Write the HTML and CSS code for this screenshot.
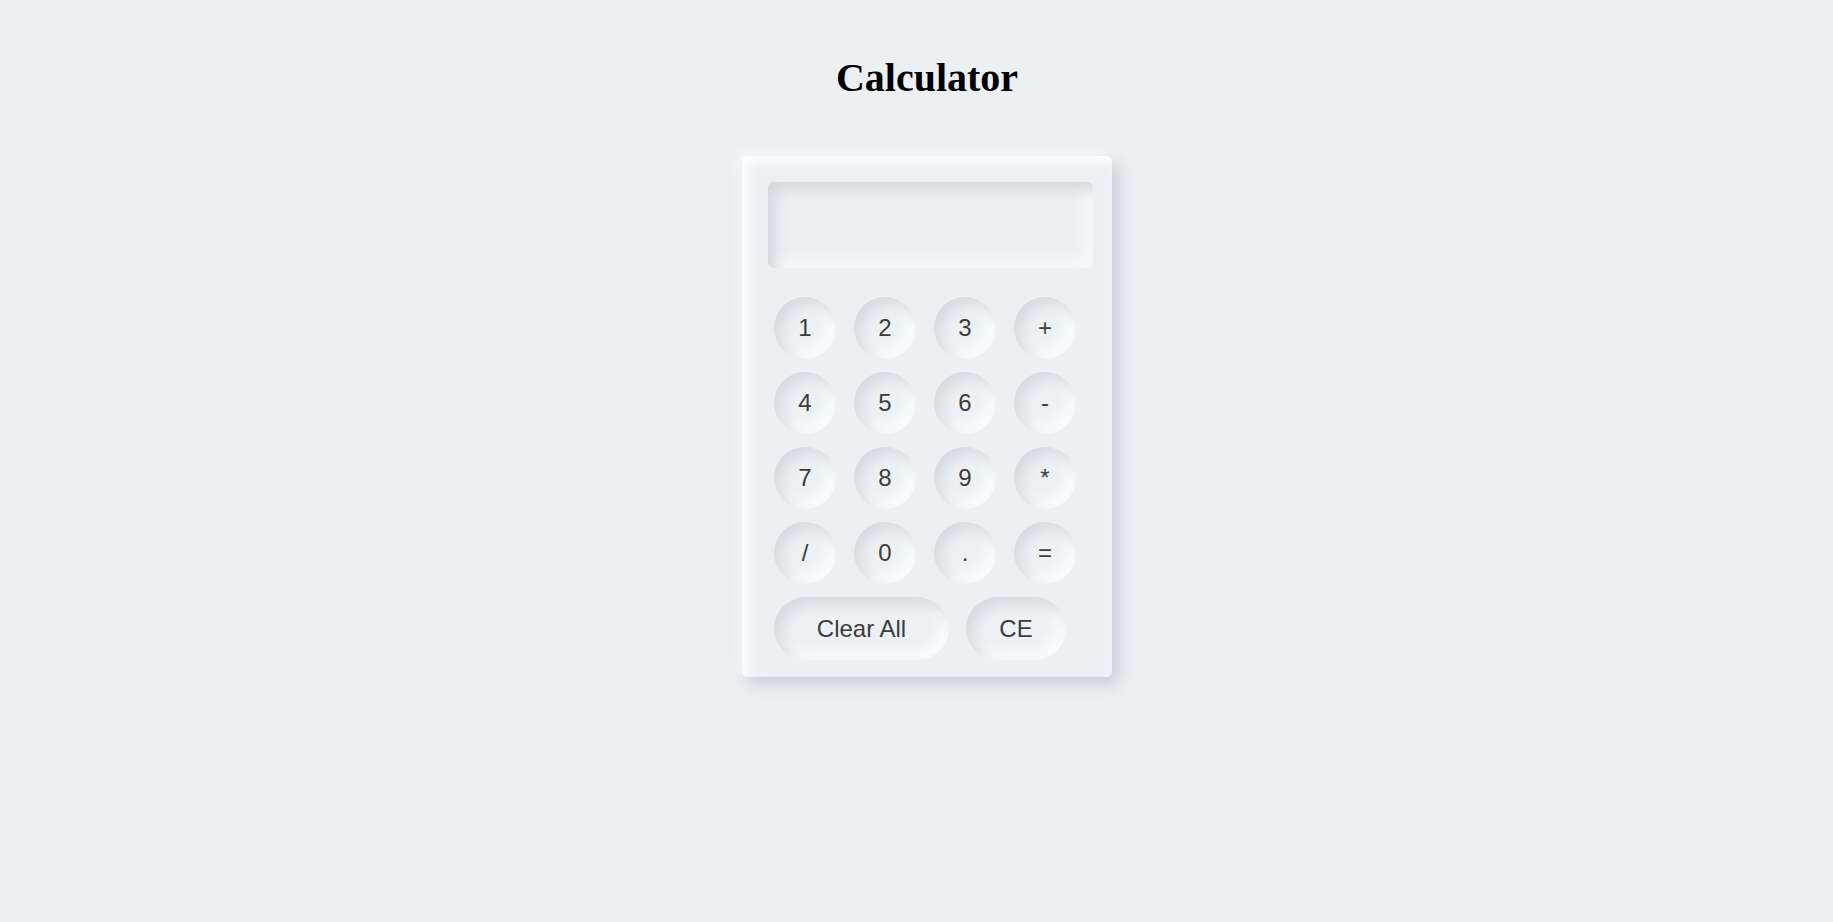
FILE: index.html
```html
<!DOCTYPE html>
<html>
<head>
<meta charset="utf-8">
<title>Calculator</title>
<link rel="stylesheet" href="styles.css">
</head>
<body>
<div class="page">
  <h1 class="title">Calculator</h1>
  <div class="calc">
    <div class="display"></div>
    <div class="keys">
      <button class="key">1</button>
      <button class="key">2</button>
      <button class="key">3</button>
      <button class="key">+</button>
      <button class="key">4</button>
      <button class="key">5</button>
      <button class="key">6</button>
      <button class="key">-</button>
      <button class="key">7</button>
      <button class="key">8</button>
      <button class="key">9</button>
      <button class="key">*</button>
      <button class="key">/</button>
      <button class="key">0</button>
      <button class="key">.</button>
      <button class="key">=</button>
    </div>
    <div class="actions">
      <button class="key wide">Clear All</button>
      <button class="key ce">CE</button>
    </div>
  </div>
</div>
</body>
</html>
```

FILE: styles.css
```css
html, body {
  margin: 0;
  padding: 0;
  background: #ecf0f3;
  height: 100%;
}
.page {
  display: flex;
  flex-direction: column;
  align-items: center;
  padding-left: 21px;
  padding-top: 1px;
}
.title {
  font-family: "Liberation Serif", "Times New Roman", serif;
  font-weight: bold;
  font-size: 40px;
  line-height: 46px;
  margin: 54px 0 55px 0;
  color: #000;
}
.calc {
  box-sizing: border-box;
  width: 370px;
  height: 521px;
  background: #ecf0f3;
  border-radius: 5px;
  padding: 26px 19px 17px 26px;
  box-shadow: 6px 7px 16px rgba(165, 175, 188, 0.55),
              -4px -4px 10px rgba(255, 255, 255, 0.8),
              inset 6px 6px 12px rgba(255, 255, 255, 0.95);
}
.display {
  width: 325px;
  height: 86px;
  border-radius: 6px;
  background: #ecf0f3;
  box-shadow: inset 7px 7px 14px #d3d7dc, inset -7px -7px 14px #fafbfc;
}
.keys {
  display: grid;
  grid-template-columns: repeat(4, 62px);
  grid-auto-rows: 62px;
  column-gap: 18px;
  row-gap: 13px;
  margin: 29px 0 0 6px;
}
.key {
  border: none;
  padding: 0;
  margin: 0;
  font-family: "Liberation Sans", Arial, sans-serif;
  font-size: 24px;
  color: #3d3d3d;
  background: #eef1f4;
  box-shadow: inset 7px 7px 14px #d6dadf, inset -7px -7px 14px #fcfdfd;
  border-radius: 50%;
  width: 62px;
  height: 62px;
  display: flex;
  align-items: center;
  justify-content: center;
}
.actions {
  display: flex;
  gap: 17px;
  margin: 13px 0 0 6px;
}
.wide {
  width: 175px;
  height: 63px;
  border-radius: 32px;
}
.ce {
  width: 100px;
  height: 63px;
  border-radius: 32px;
}
```
